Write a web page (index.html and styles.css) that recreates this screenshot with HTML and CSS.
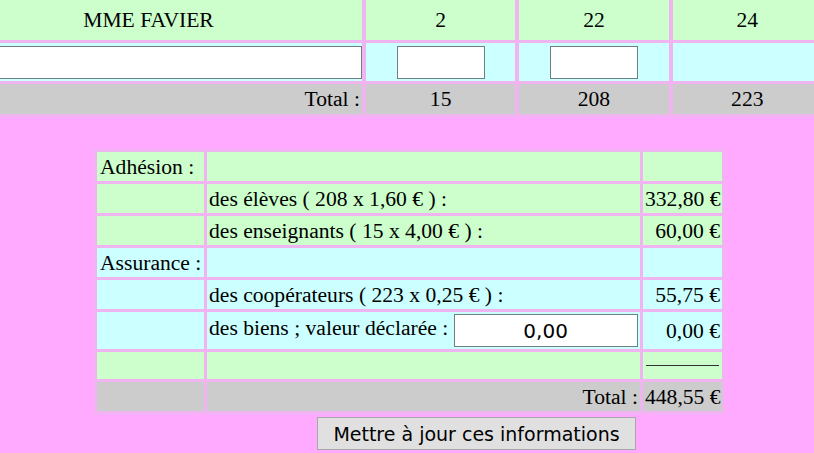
FILE: index.html
```html
<!DOCTYPE html>
<html lang="fr">
  <head>
    <meta charset="UTF-8" />
    <title>Coopérative scolaire - adhésion</title>
    <link rel="stylesheet" href="styles.css">
  </head>
  <body>
    <table class="classes">
      <tr class="vert">
        <td class="nom">MME FAVIER</td>
        <td class="num">2</td>
        <td class="num">22</td>
        <td class="num">24</td>
      </tr>
      <tr class="bleu saisie">
        <td><input type="text" class="champ-nom"></td>
        <td class="num"><input type="text" class="champ-num"></td>
        <td class="num"><input type="text" class="champ-num"></td>
        <td></td>
      </tr>
      <tr class="gris total">
        <td class="droite">Total :</td>
        <td class="num">15</td>
        <td class="num">208</td>
        <td class="num">223</td>
      </tr>
    </table>

    <form class="bilan">
      <table class="montants">
        <tr class="vert">
          <td class="rubrique">Adhésion :</td>
          <td></td>
          <td></td>
        </tr>
        <tr class="vert">
          <td></td>
          <td>des élèves ( 208 x 1,60 € ) :</td>
          <td class="droite">332,80 €</td>
        </tr>
        <tr class="vert">
          <td></td>
          <td>des enseignants ( 15 x 4,00 € ) :</td>
          <td class="droite">60,00 €</td>
        </tr>
        <tr class="bleu">
          <td class="rubrique">Assurance :</td>
          <td></td>
          <td></td>
        </tr>
        <tr class="bleu">
          <td></td>
          <td>des coopérateurs ( 223 x 0,25 € ) :</td>
          <td class="droite">55,75 €</td>
        </tr>
        <tr class="bleu biens">
          <td></td>
          <td>des biens ; valeur déclarée : <input type="text" class="champ-valeur" value="0,00"></td>
          <td class="droite">0,00 €</td>
        </tr>
        <tr class="vert trait">
          <td></td>
          <td></td>
          <td><div class="ligne"></div></td>
        </tr>
        <tr class="gris">
          <td></td>
          <td class="droite">Total :</td>
          <td class="droite">448,55 €</td>
        </tr>
      </table>
      <button type="button" class="maj">Mettre à jour ces informations</button>
    </form>
  </body>
</html>
```

FILE: styles.css
```css
body {
  margin: 0;
  background-color: #ffaaff;
  font-family: "Liberation Serif", "Times New Roman", serif;
  font-size: 21.6px;
  color: #000;
  overflow: hidden;
}
table {
  border-collapse: separate;
  background-color: #f0b4f0;
  table-layout: fixed;
}
td {
  padding: 0 2px;
  white-space: nowrap;
  line-height: 24px;
}
.vert td {
  background-color: #ccffcc;
}
.bleu td {
  background-color: #ccffff;
}
.gris td {
  background-color: #cccccc;
}
.droite {
  text-align: right;
}
.num {
  text-align: center;
}

/* tableau des classes */
.classes {
  width: 893px;
  border-spacing: 4px 3px;
  margin: -3px 0 0 -67px;
}
.classes td:nth-child(1) {
  width: 422px;
}
.classes td:nth-child(2),
.classes td:nth-child(3),
.classes td:nth-child(4) {
  width: 145px;
}
.classes .vert td {
  height: 40px;
}
.classes .saisie td {
  height: 38px;
  padding: 0;
}
.classes .total td {
  height: 30px;
}
.classes .nom {
  text-align: center;
  padding-left: 0;
}
input {
  box-sizing: border-box;
  border: 1px solid #6f8080;
  background: #fff;
  vertical-align: middle;
}
.champ-nom {
  width: 425px;
  height: 33px;
}
.champ-num {
  width: 88px;
  height: 33px;
}

/* bilan */
.bilan {
  margin: 32px 0 0 94px;
}
.montants {
  width: 630px;
  border-spacing: 3px;
}
.montants td:nth-child(1) {
  width: 102px;
}
.montants td:nth-child(2) {
  width: 429px;
}
.montants td:nth-child(3) {
  width: 75px;
}
.montants td {
  height: 29px;
}
.montants .biens td {
  height: 37px;
}
.montants .trait td {
  height: 27px;
}
.rubrique {
  padding-left: 3px;
}
.champ-valeur {
  width: 184px;
  height: 33px;
  font-family: "DejaVu Sans", Verdana, sans-serif;
  font-size: 20px;
  text-align: center;
  padding: 0;
}
.ligne {
  border-top: 1px solid #333;
  margin: 0 1px;
}
.maj {
  display: block;
  margin: 3px 0 0 223px;
  width: 319px;
  height: 33px;
  font-family: "DejaVu Sans", Verdana, sans-serif;
  font-size: 19px;
  background-color: #e0e0e0;
  border: 1px solid #a8a8a8;
  padding: 0;
}
```
